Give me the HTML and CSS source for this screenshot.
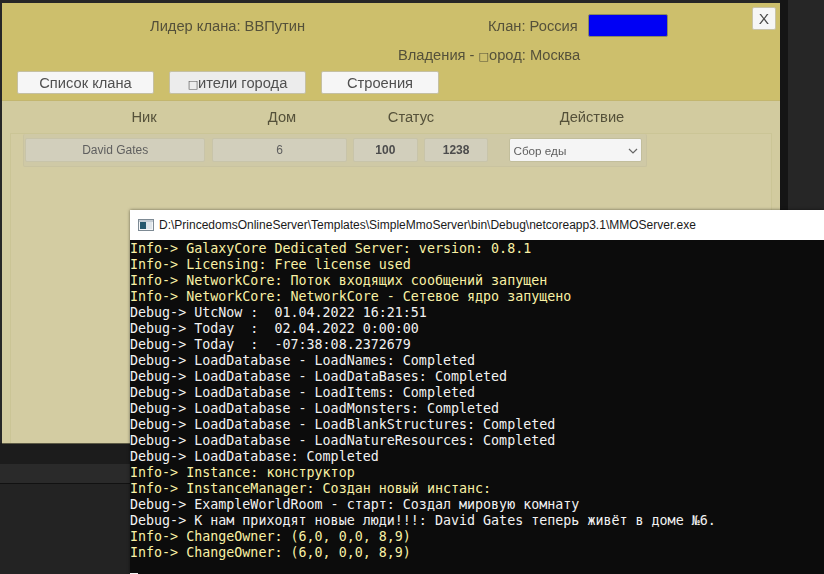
FILE: index.html
```html
<!DOCTYPE html>
<html lang="ru">
<head>
<meta charset="utf-8">
<title>MMOServer</title>
<link rel="stylesheet" href="styles.css">
</head>
<body>
<div class="desktop">
  <div class="bar bar-a"></div>
  <div class="bar bar-b"></div>
  <div class="bar bar-c"></div>
  <div class="side-strip"></div>

  <section class="dialog">
    <header class="head">
      <button class="close">X</button>
      <div class="info-row">
        <span class="leader">Лидер клана: ВВПутин</span>
        <span class="clan">Клан: Россия</span>
        <span class="swatch"></span>
      </div>
      <div class="domain-row">Владения - <span class="tofu">□</span>ород: Москва</div>
      <nav class="tabs">
        <button class="tab tab-a">Список клана</button>
        <button class="tab tab-b active"><span class="tofu">□</span>ители города</button>
        <button class="tab tab-c">Строения</button>
      </nav>
    </header>
    <div class="body">
      <div class="cols">
        <span>Ник</span><span>Дом</span><span>Статус</span><span>Действие</span>
      </div>
      <div class="panel">
        <div class="row">
          <span class="cell c-name">David Gates</span>
          <span class="cell c-home">6</span>
          <span class="cell c-num">100</span>
          <span class="cell c-num">1238</span>
          <span class="select">Сбор еды
            <svg class="chev" width="10" height="6" viewBox="0 0 10 6"><path d="M1 1l4 4 4-4" fill="none" stroke="#666" stroke-width="1.2"/></svg>
          </span>
        </div>
      </div>
    </div>
  </section>

  <section class="console">
    <div class="titlebar">
      <svg class="appicon" width="16" height="16" viewBox="0 0 16 16">
        <rect x="0.5" y="2.5" width="15" height="11" fill="#f4f6f8" stroke="#7d8a94"/>
        <rect x="1" y="3" width="14" height="2" fill="#c4ccd4"/>
        <rect x="2" y="5" width="6" height="7" fill="#26586e"/>
        <rect x="8" y="5" width="6" height="7" fill="#dfe5ea"/>
      </svg>
      <span class="path">D:\PrincedomsOnlineServer\Templates\SimpleMmoServer\bin\Debug\netcoreapp3.1\MMOServer.exe</span>
    </div>
    <pre class="log"><span class="i">Info-&gt; GalaxyCore Dedicated Server: version: 0.8.1</span>
<span class="i">Info-&gt; Licensing: Free license used</span>
<span class="i">Info-&gt; NetworkCore: Поток входящих сообщений запущен</span>
<span class="i">Info-&gt; NetworkCore: NetworkCore - Сетевое ядро запущено</span>
Debug-&gt; UtcNow :  01.04.2022 16:21:51
Debug-&gt; Today  :  02.04.2022 0:00:00
Debug-&gt; Today  :  -07:38:08.2372679
Debug-&gt; LoadDatabase - LoadNames: Completed
Debug-&gt; LoadDatabase - LoadDataBases: Completed
Debug-&gt; LoadDatabase - LoadItems: Completed
Debug-&gt; LoadDatabase - LoadMonsters: Completed
Debug-&gt; LoadDatabase - LoadBlankStructures: Completed
Debug-&gt; LoadDatabase - LoadNatureResources: Completed
Debug-&gt; LoadDatabase: Completed
<span class="i">Info-&gt; Instance: конструктор</span>
<span class="i">Info-&gt; InstanceManager: Создан новый инстанс:</span>
Debug-&gt; ExampleWorldRoom - старт: Создал мировую комнату
Debug-&gt; К нам приходят новые люди!!!: David Gates теперь живёт в доме №6.
<span class="i">Info-&gt; ChangeOwner: (6,0, 0,0, 8,9)</span>
<span class="i">Info-&gt; ChangeOwner: (6,0, 0,0, 8,9)</span>
<span class="cursor"></span></pre>
  </section>
</div>
</body>
</html>
```
FILE: styles.css
```css
* { box-sizing: border-box; }
html, body { margin: 0; padding: 0; }
body { width: 824px; height: 574px; overflow: hidden; background: #1f1f1f; }
.desktop { position: relative; width: 824px; height: 574px; overflow: hidden; background: #262626; font-family: "Liberation Sans", Arial, sans-serif; }

.side-strip { position: absolute; left: 780px; top: 0; width: 8px; height: 210px; background: #151515; }
.bar { position: absolute; left: 0; width: 130px; }
.bar-a { top: 443px; height: 21px; background: #1c1c1c; }
.bar-b { top: 464px; height: 20px; background: #2a2a2a; border-bottom: 1px solid #111; }
.bar-c { top: 484px; height: 90px; background: #232323; }

.dialog { position: absolute; left: 2px; top: 3px; width: 778px; height: 440px; background: #d2cb9f; color: #55513a; filter: blur(0.35px); display: flex; flex-direction: column; box-shadow: 0 1px 0 #5c5a45; }

.head { position: relative; height: 98px; flex: none; background: #cdbf6c; border-bottom: 1px solid #c3b66e; padding: 11px 0 0 15px; }
.close { position: absolute; right: 4px; top: 4px; width: 24px; height: 23px; border: 1px solid #c9c4a8; border-radius: 2px; background: #f6f6f6; color: #4b4b4b; font: 15.5px "Liberation Sans", sans-serif; padding: 0; }

.info-row { display: flex; align-items: center; height: 23px; font-size: 14.7px; }
.leader { margin-left: 133px; width: 338px; }
.clan { width: 100px; }
.swatch { width: 80px; height: 23px; background: #0000f5; border: 1px solid #8a8a60; border-radius: 2px; }

.domain-row { font-size: 14.7px; height: 20px; line-height: 20px; margin-top: 8px; padding-left: 381px; }
.tofu { font-size: 11px; font-family: "DejaVu Sans", sans-serif; }

.tabs { display: flex; gap: 15px; margin-top: 6px; }
.tab { height: 23px; border: 1px solid #c5c0a2; border-radius: 2px; background: #f6f6f6; color: #505050; font: 14.7px "Liberation Sans", sans-serif; padding: 0; }
.tab-a { width: 137px; }
.tab-b { width: 137px; background: #ececec; }
.tab-c { width: 118px; }

.body { flex: 1; display: flex; flex-direction: column; }
.cols { display: grid; grid-template-columns: 168px 108px 150px 212px; padding: 6px 0 0 58px; height: 32px; font-size: 14.7px; text-align: center; line-height: 20px; }

.panel { flex: 1; margin: 0 8px 0 8px; border: 1px solid #cbc596; border-bottom: 0; background: #d3cca2; padding: 0 0 0 12px; }
.row { width: 624px; height: 33px; display: flex; align-items: center; gap: 6px; padding: 4px 4px 4px 1px; background: #cfc9a6; border: 1px solid #c9c3a0; border-top: 0; border-radius: 2px; margin-top: 0; }
.cell { height: 24px; display: flex; align-items: center; justify-content: center; background: #d2cfbc; border: 1px solid #c8c4a9; border-radius: 2px; font-size: 12px; color: #5f5f5f; }
.c-name { width: 181px; margin-right: 1px; }
.c-home { width: 135px; }
.c-num { width: 65px; font-weight: bold; color: #4c4c4c; }
.select { position: relative; width: 133px; height: 24px; margin-left: 15px; background: #f5f5f5; border: 1px solid #c2be9c; border-radius: 2px; font-size: 11.7px; color: #5f5f5f; line-height: 23px; padding-left: 3px; }
.chev { position: absolute; right: 3px; top: 9px; }

.console { position: absolute; left: 130px; top: 210px; width: 694px; height: 364px; background: #0c0c0c; box-shadow: 0 0 3px rgba(0,0,0,.5); }
.titlebar { height: 30px; background: #fff; display: flex; align-items: center; padding-left: 8px; gap: 5px; }
.appicon { flex: none; }
.path { font: 12px "Liberation Sans", Arial, sans-serif; color: #1a1a1a; white-space: nowrap; }
.log { margin: 0; padding: 1px 0 0 0; font: 13.33px/16px "DejaVu Sans Mono", "Liberation Mono", monospace; color: #f2f2f2; }
.i { color: #f9f1a5; }
.cursor { display: inline-block; width: 8px; height: 3px; background: #f2f2f2; vertical-align: -3px; }
```
